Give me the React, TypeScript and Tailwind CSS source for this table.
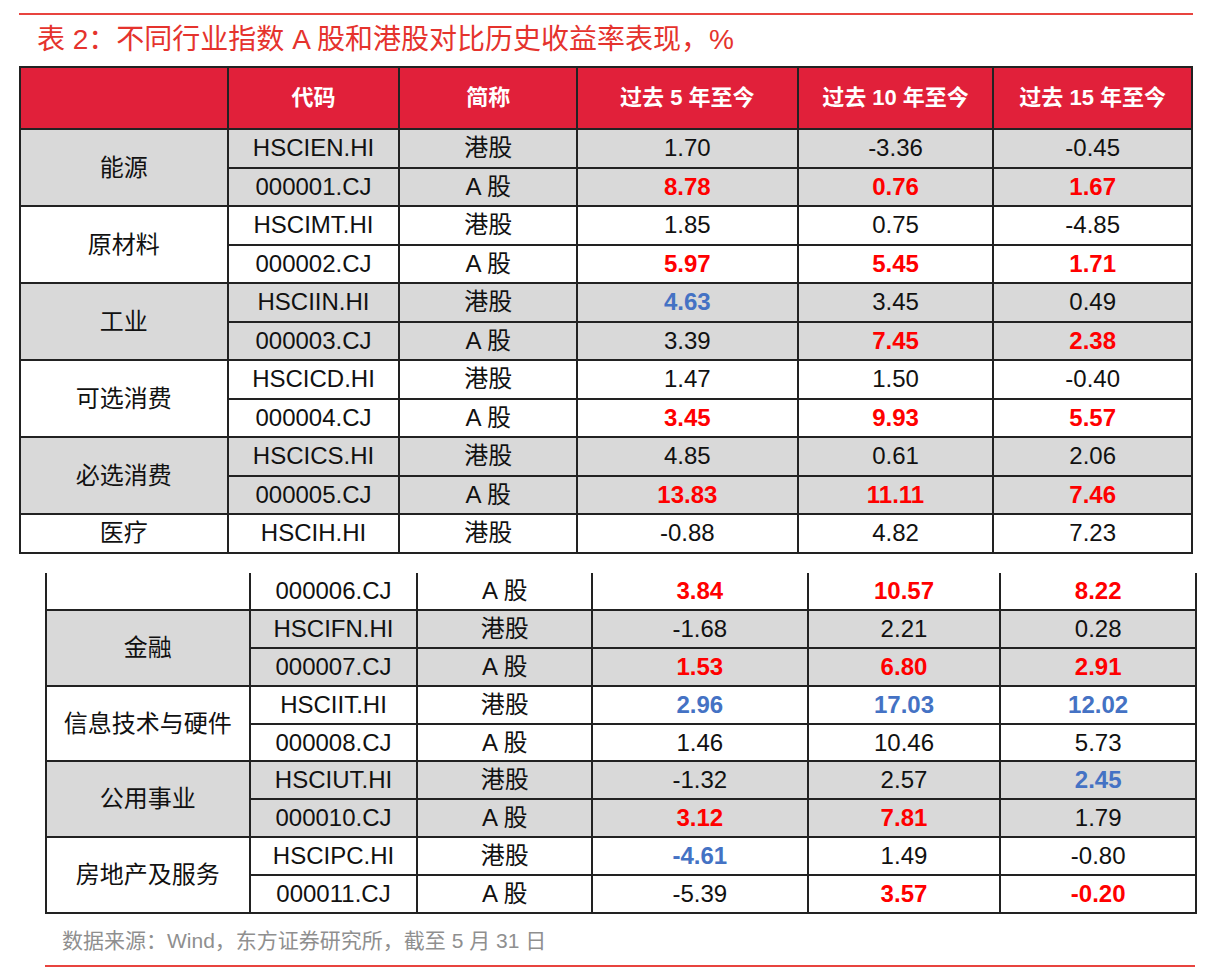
import React from "react";

type Row = { code: string; kind: string; vals: string[] };
type Group = { name: string; gray: boolean; rows: Row[] };

// value suffix: r = red bold, b = blue bold
const top: Group[] = [
  {
    name: "能源",
    gray: true,
    rows: [
      { code: "HSCIEN.HI", kind: "港股", vals: ["1.70", "-3.36", "-0.45"] },
      { code: "000001.CJ", kind: "A 股", vals: ["8.78r", "0.76r", "1.67r"] },
    ],
  },
  {
    name: "原材料",
    gray: false,
    rows: [
      { code: "HSCIMT.HI", kind: "港股", vals: ["1.85", "0.75", "-4.85"] },
      { code: "000002.CJ", kind: "A 股", vals: ["5.97r", "5.45r", "1.71r"] },
    ],
  },
  {
    name: "工业",
    gray: true,
    rows: [
      { code: "HSCIIN.HI", kind: "港股", vals: ["4.63b", "3.45", "0.49"] },
      { code: "000003.CJ", kind: "A 股", vals: ["3.39", "7.45r", "2.38r"] },
    ],
  },
  {
    name: "可选消费",
    gray: false,
    rows: [
      { code: "HSCICD.HI", kind: "港股", vals: ["1.47", "1.50", "-0.40"] },
      { code: "000004.CJ", kind: "A 股", vals: ["3.45r", "9.93r", "5.57r"] },
    ],
  },
  {
    name: "必选消费",
    gray: true,
    rows: [
      { code: "HSCICS.HI", kind: "港股", vals: ["4.85", "0.61", "2.06"] },
      { code: "000005.CJ", kind: "A 股", vals: ["13.83r", "11.11r", "7.46r"] },
    ],
  },
  {
    name: "医疗",
    gray: false,
    rows: [{ code: "HSCIH.HI", kind: "港股", vals: ["-0.88", "4.82", "7.23"] }],
  },
];

const bottom: Group[] = [
  {
    name: "",
    gray: false,
    rows: [{ code: "000006.CJ", kind: "A 股", vals: ["3.84r", "10.57r", "8.22r"] }],
  },
  {
    name: "金融",
    gray: true,
    rows: [
      { code: "HSCIFN.HI", kind: "港股", vals: ["-1.68", "2.21", "0.28"] },
      { code: "000007.CJ", kind: "A 股", vals: ["1.53r", "6.80r", "2.91r"] },
    ],
  },
  {
    name: "信息技术与硬件",
    gray: false,
    rows: [
      { code: "HSCIIT.HI", kind: "港股", vals: ["2.96b", "17.03b", "12.02b"] },
      { code: "000008.CJ", kind: "A 股", vals: ["1.46", "10.46", "5.73"] },
    ],
  },
  {
    name: "公用事业",
    gray: true,
    rows: [
      { code: "HSCIUT.HI", kind: "港股", vals: ["-1.32", "2.57", "2.45b"] },
      { code: "000010.CJ", kind: "A 股", vals: ["3.12r", "7.81r", "1.79"] },
    ],
  },
  {
    name: "房地产及服务",
    gray: false,
    rows: [
      { code: "HSCIPC.HI", kind: "港股", vals: ["-4.61b", "1.49", "-0.80"] },
      { code: "000011.CJ", kind: "A 股", vals: ["-5.39", "3.57r", "-0.20r"] },
    ],
  },
];

function Value({ v }: { v: string }) {
  const tag = v.slice(-1);
  if (tag === "r") return <span className="font-bold text-[#ff0000]">{v.slice(0, -1)}</span>;
  if (tag === "b") return <span className="font-bold text-[#4472c4]">{v.slice(0, -1)}</span>;
  return <span>{v}</span>;
}

function Body({ groups, rowH, noTop }: { groups: Group[]; rowH: string; noTop?: boolean }) {
  return (
    <tbody>
      {groups.flatMap((g, gi) =>
        g.rows.map((r, ri) => {
          const first = noTop && gi === 0 && ri === 0;
          const cell = `border-2 border-[#222] text-center align-middle ${first ? "border-t-0" : ""}`;
          return (
            <tr key={`${gi}-${ri}`} className={`${rowH} ${g.gray ? "bg-[#d9d9d9]" : "bg-white"}`}>
              {ri === 0 && (
                <td rowSpan={g.rows.length} className={cell}>
                  {g.name}
                </td>
              )}
              <td className={cell}>{r.code}</td>
              <td className={cell}>{r.kind}</td>
              {r.vals.map((v, vi) => (
                <td key={vi} className={cell}>
                  <Value v={v} />
                </td>
              ))}
            </tr>
          );
        })
      )}
    </tbody>
  );
}

export default function App() {
  return (
    <div className="w-[1221px] h-[976px] bg-white font-['Liberation_Sans','Noto_Sans_CJK_SC',sans-serif] text-[#111]">
      <div className="pt-[13px] pl-[19px] w-[1193px]">
        <div className="h-[2px] bg-[#e8443f]" />
        <h1 className="mt-[10px] ml-[18px] text-[28px] leading-[30px] text-[#e5332d] font-normal">
          表 2：不同行业指数 A 股和港股对比历史收益率表现，%
        </h1>
        <table className="mt-[11px] w-[1174px] border-collapse text-[24px] leading-none">
          <colgroup>
            <col className="w-[208px]" />
            <col className="w-[172px]" />
            <col className="w-[178px]" />
            <col className="w-[221px]" />
            <col className="w-[196px]" />
            <col className="w-[199px]" />
          </colgroup>
          <thead>
            <tr className="h-[62px] bg-[#e1203a] text-white font-bold text-[22px]">
              <th className="border-2 border-[#222]"></th>
              <th className="border-2 border-[#222]">代码</th>
              <th className="border-2 border-[#222]">简称</th>
              <th className="border-2 border-[#222]">过去 5 年至今</th>
              <th className="border-2 border-[#222]">过去 10 年至今</th>
              <th className="border-2 border-[#222]">过去 15 年至今</th>
            </tr>
          </thead>
          <Body groups={top} rowH="h-[38.5px]" />
        </table>
      </div>
      <div className="pl-[45px] pt-[19px] w-[1197px]">
        <table className="w-[1152px] border-collapse text-[24px] leading-none">
          <colgroup>
            <col className="w-[204px]" />
            <col className="w-[168px]" />
            <col className="w-[175px]" />
            <col className="w-[216px]" />
            <col className="w-[193px]" />
            <col className="w-[196px]" />
          </colgroup>
          <Body groups={bottom} rowH="h-[37.8px]" noTop />
        </table>
        <p className="mt-[15px] ml-[17px] text-[21px] leading-[24px] text-[#8f8f8f]">
          数据来源：Wind，东方证券研究所，截至 5 月 31 日
        </p>
        <div className="mt-[12px] h-[2px] w-[1150px] bg-[#e8443f]" />
      </div>
    </div>
  );
}
